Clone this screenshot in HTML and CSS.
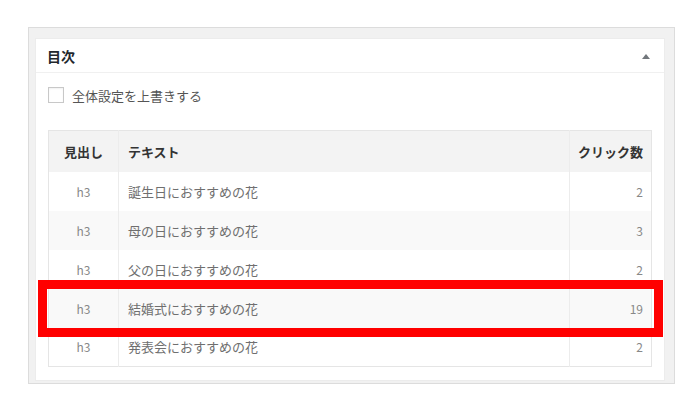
FILE: index.html
```html
<!DOCTYPE html>
<html lang="ja">
<head>
<meta charset="utf-8">
<link rel="stylesheet" href="styles.css">
</head>
<body>
<div class="frame">
  <div class="postbox">
    <div class="postbox-head">
      <h2 class="title">目次</h2>
      <span class="toggle"></span>
    </div>
    <div class="inside">
      <label class="override"><span class="checkbox"></span>全体設定を上書きする</label>
      <div class="table-wrap">
        <table class="toc">
          <thead>
            <tr><th class="c-tag">見出し</th><th class="c-text">テキスト</th><th class="c-num">クリック数</th></tr>
          </thead>
          <tbody>
            <tr><td class="c-tag">h3</td><td class="c-text">誕生日におすすめの花</td><td class="c-num">2</td></tr>
            <tr><td class="c-tag">h3</td><td class="c-text">母の日におすすめの花</td><td class="c-num">3</td></tr>
            <tr><td class="c-tag">h3</td><td class="c-text">父の日におすすめの花</td><td class="c-num">2</td></tr>
            <tr><td class="c-tag">h3</td><td class="c-text">結婚式におすすめの花</td><td class="c-num">19</td></tr>
            <tr><td class="c-tag">h3</td><td class="c-text">発表会におすすめの花</td><td class="c-num">2</td></tr>
          </tbody>
        </table>
        <div class="highlight"></div>
      </div>
    </div>
  </div>
</div>
</body>
</html>
```
FILE: styles.css
```css
* { box-sizing: border-box; }
html, body { margin: 0; padding: 0; background: #fff; }
body {
  font-family: "Noto Sans CJK JP", "Noto Sans", sans-serif;
  color: #555;
  width: 700px;
  height: 404px;
  overflow: hidden;
}
.frame {
  margin: 27px 0 0 28px;
  width: 647px;
  height: 357px;
  border: 1px solid #dcdcdc;
  background: #f1f1f1;
  padding: 10px 9px 2px 6px;
}
.postbox {
  background: #fff;
  border: 1px solid #ececec;
  height: 100%;
}
.postbox-head {
  height: 34px;
  border-bottom: 1px solid #f0f0f0;
  display: flex;
  align-items: center;
  justify-content: space-between;
  padding: 0 14px 0 11px;
}
.title {
  margin: 0;
  font-size: 14px;
  font-weight: bold;
  color: #23282d;
  line-height: 1;
}
.toggle {
  width: 0;
  height: 0;
  border-left: 4px solid transparent;
  border-right: 4px solid transparent;
  border-bottom: 5px solid #72777c;
  margin-top: 2px;
}
.inside {
  padding: 14px 11px 0 12px;
}
.override {
  display: flex;
  align-items: center;
  font-size: 13px;
  color: #555;
  height: 16px;
  line-height: 1;
}
.checkbox {
  width: 16px;
  height: 16px;
  border: 1px solid #c8c8c8;
  background: #fff;
  margin-right: 8px;
  box-shadow: inset 0 1px 2px rgba(0,0,0,0.06);
}
.table-wrap {
  position: relative;
  margin-top: 27px;
  width: 604px;
}
.toc {
  width: 604px;
  border-collapse: collapse;
  border: 1px solid #e5e5e5;
  font-size: 13px;
  table-layout: fixed;
}
.toc th {
  background: #f3f3f3;
  height: 41px;
  font-size: 13px;
  font-weight: bold;
  color: #333;
  padding: 0;
}
.toc td {
  height: 39px;
  padding: 0;
  color: #6f6f6f;
}
.toc tbody tr:nth-child(even) td { background: #f9f9f9; }
.c-tag { width: 70px; text-align: center; border-right: 1px solid #ececec; }
.c-text { text-align: left; padding-left: 9px !important; border-right: 1px solid #ececec; }
.c-num { width: 82px; text-align: right; padding-right: 8px !important; }
.toc td.c-tag { color: #888; font-size: 12px; }
.toc td.c-num { font-size: 12px; color: #888; }
.highlight {
  position: absolute;
  left: -10px;
  top: 150px;
  width: 625px;
  height: 57px;
  border: 9px solid #ff0000;
}
```
